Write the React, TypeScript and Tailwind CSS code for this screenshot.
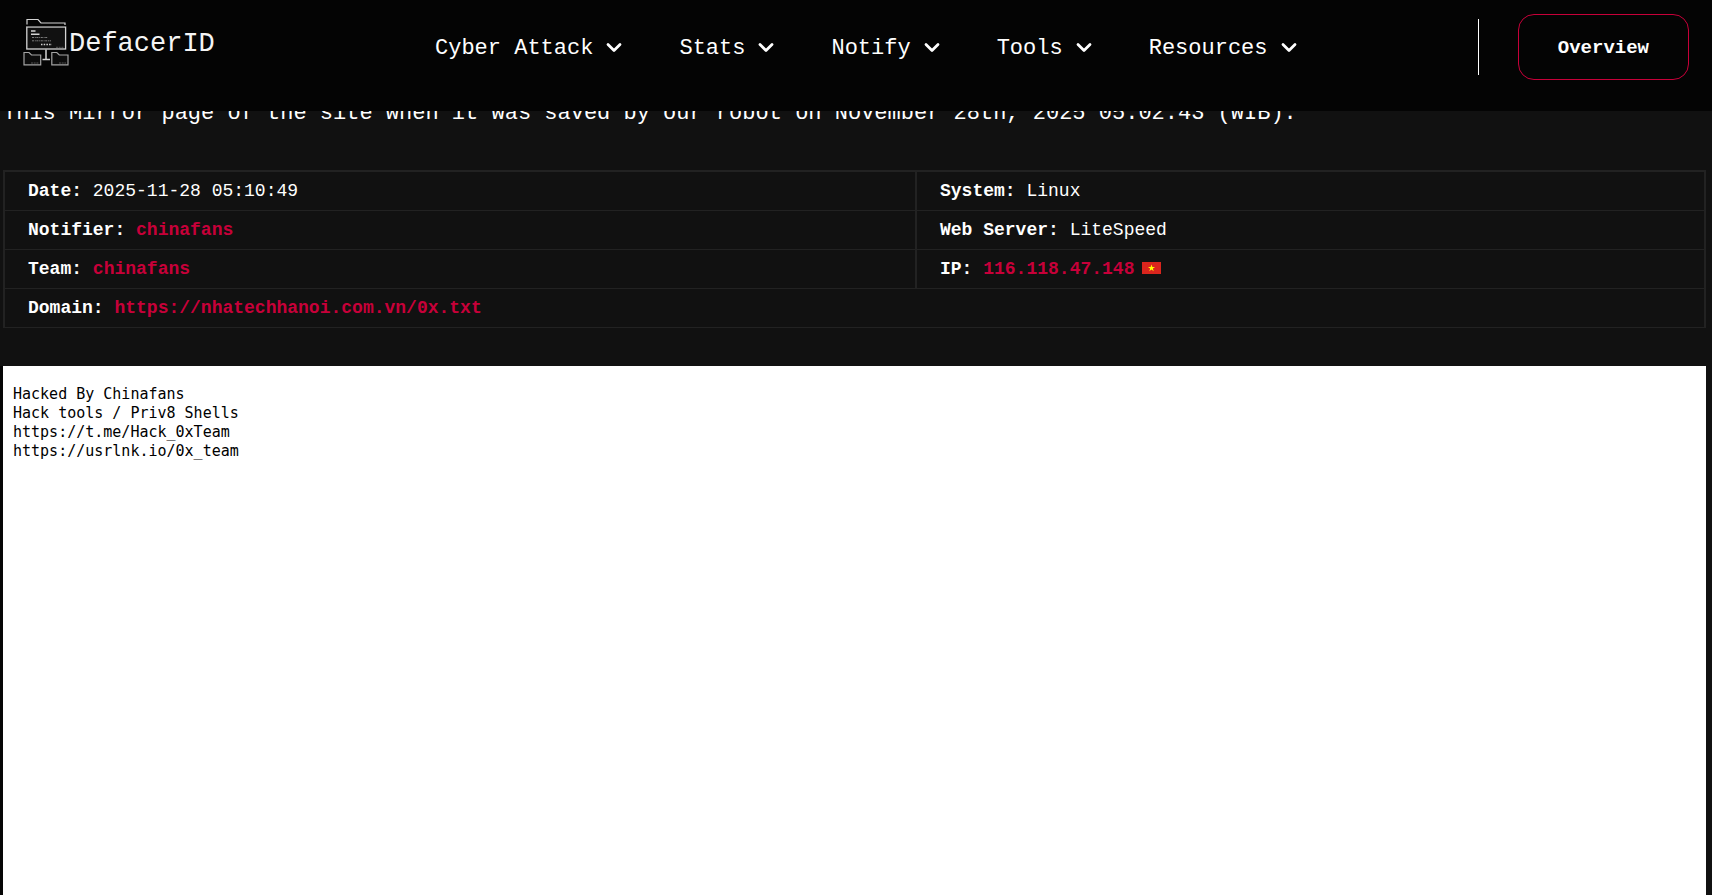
import React from "react";

const navItems = ["Cyber Attack", "Stats", "Notify", "Tools", "Resources"];

function Chevron() {
  return (
    <svg className="mb-1 h-4 w-4 shrink-0" viewBox="0 0 16 16" fill="none" stroke="currentColor" strokeWidth="2.8" strokeLinecap="round" strokeLinejoin="round" aria-hidden="true">
      <path d="M2 5.5 8 11.5 14 5.5" />
    </svg>
  );
}

function LogoMark() {
  return (
    <svg className="h-12 w-[46px] shrink-0" viewBox="0 0 46 48" fill="none" stroke="#d4d4d4" aria-hidden="true">
      <path d="M4 6.5V1.5H15L18 5H42V7" strokeWidth="1.2" />
      <rect x="3.8" y="9" width="38.8" height="22" fill="#111" strokeWidth="1.3" />
      <path d="M3.5 8.5H43" stroke="#777" />
      <path d="M8 13H12.5M8 16.2H16.5" strokeWidth="1.5" />
      <path d="M9 19.5H25M9 22.8H28" stroke="#888" strokeWidth=".9" strokeDasharray="2 .8 1 .6" />
      <path d="M18 26.5H29" strokeWidth="1.3" strokeDasharray="1.5 1.2" />
      <path d="M33 29.3H41" stroke="#555" strokeDasharray="2 .7" />
      <path d="M23 31.5V41.5M19.5 41.5H27" strokeWidth="1.5" />
      <path d="M1 34.5H6L8.5 37H17.7V46.8H1Z" stroke="#a3a3a3" strokeWidth="1.2" fill="#0c0c0c" />
      <path d="M28.8 34.5H33.8L36.3 37H45V46.8H28.8Z" stroke="#a3a3a3" strokeWidth="1.2" fill="#0c0c0c" />
      <path d="M8 45H16M36 45H43" stroke="#555" strokeDasharray="2 .7" />
    </svg>
  );
}

function VietnamFlag() {
  return (
    <svg className="ml-2 inline-block h-3 w-[19px] align-baseline" viewBox="0 0 19 12" role="img" aria-label="Vietnam">
      <path fill="#da251d" d="M0 0h19v12H0z" />
      <path fill="#ff0" d="m9.5 2.4.85 2.6h2.7l-2.2 1.6.85 2.6-2.2-1.6-2.2 1.6.85-2.6L5.95 5h2.7z" />
    </svg>
  );
}

const cell = "border-r-2 border-b border-[#222] pl-[23px] pr-6 py-0 text-left leading-[38px]";
const red = "font-bold text-[#c70039]";

export default function App() {
  return (
    <div className="flex min-h-screen flex-col overflow-x-clip bg-[#111] font-['Liberation_Mono',monospace] text-white">
      <header className="sticky top-0 z-10 flex h-[111px] shrink-0 items-start bg-[#040404] px-[23px]">
        <a href="#" className="mt-[18px] flex w-[412px] shrink-0 items-start">
          <LogoMark />
          <span className="mt-1.5 text-[27px] leading-10 text-neutral-100">DefacerID</span>
        </a>
        <nav className="mt-[33px] flex gap-[57px]">
          {navItems.map((item) => (
            <button key={item} type="button" className="flex items-center gap-[13px] whitespace-nowrap text-[22px] leading-8">
              {item}
              <Chevron />
            </button>
          ))}
        </nav>
        <div className="ml-auto flex items-start gap-[39px]">
          <div className="mt-[19px] h-14 w-px bg-white" />
          <a href="#" className="mt-3.5 flex h-[66px] items-center rounded-2xl border border-[#c70039] px-[39px] pt-0.5 text-[19px] font-bold">
            Overview
          </a>
        </div>
      </header>

      <main className="flex grow flex-col pr-1.5 pl-[3px]">
        <p className="-mt-[13px] text-[22px] leading-8 whitespace-nowrap">
          This Mirror page of the site when it was saved by our robot on November 28th, 2025 05.02.43 (WIB).
        </p>

        <table className="mt-10 w-full border-separate border-spacing-0 border-t-2 border-l-2 border-[#222] text-[18px]">
          <colgroup>
            <col className="w-[912px]" />
            <col />
          </colgroup>
          <tbody>
            <tr>
              <td className={cell}><b>Date:</b> 2025-11-28 05:10:49</td>
              <td className={cell}><b>System:</b> Linux</td>
            </tr>
            <tr>
              <td className={cell}><b>Notifier:</b> <a href="#" className={red}>chinafans</a></td>
              <td className={cell}><b>Web Server:</b> LiteSpeed</td>
            </tr>
            <tr>
              <td className={cell}><b>Team:</b> <a href="#" className={red}>chinafans</a></td>
              <td className={cell}><b>IP:</b> <a href="#" className={red}>116.118.47.148</a><VietnamFlag /></td>
            </tr>
            <tr>
              <td colSpan={2} className={cell}><b>Domain:</b> <a href="#" className={red}>https://nhatechhanoi.com.vn/0x.txt</a></td>
            </tr>
          </tbody>
        </table>

        <section className="mt-[38px] -ml-[3px] grow border-l-[3px] border-[#050505] bg-white px-2.5 py-[19px] text-black">
          <pre className="font-['DejaVu_Sans_Mono',monospace] text-[15px] leading-[19px]">{`Hacked By Chinafans
Hack tools / Priv8 Shells
https://t.me/Hack_0xTeam
https://usrlnk.io/0x_team`}</pre>
        </section>
      </main>
    </div>
  );
}
